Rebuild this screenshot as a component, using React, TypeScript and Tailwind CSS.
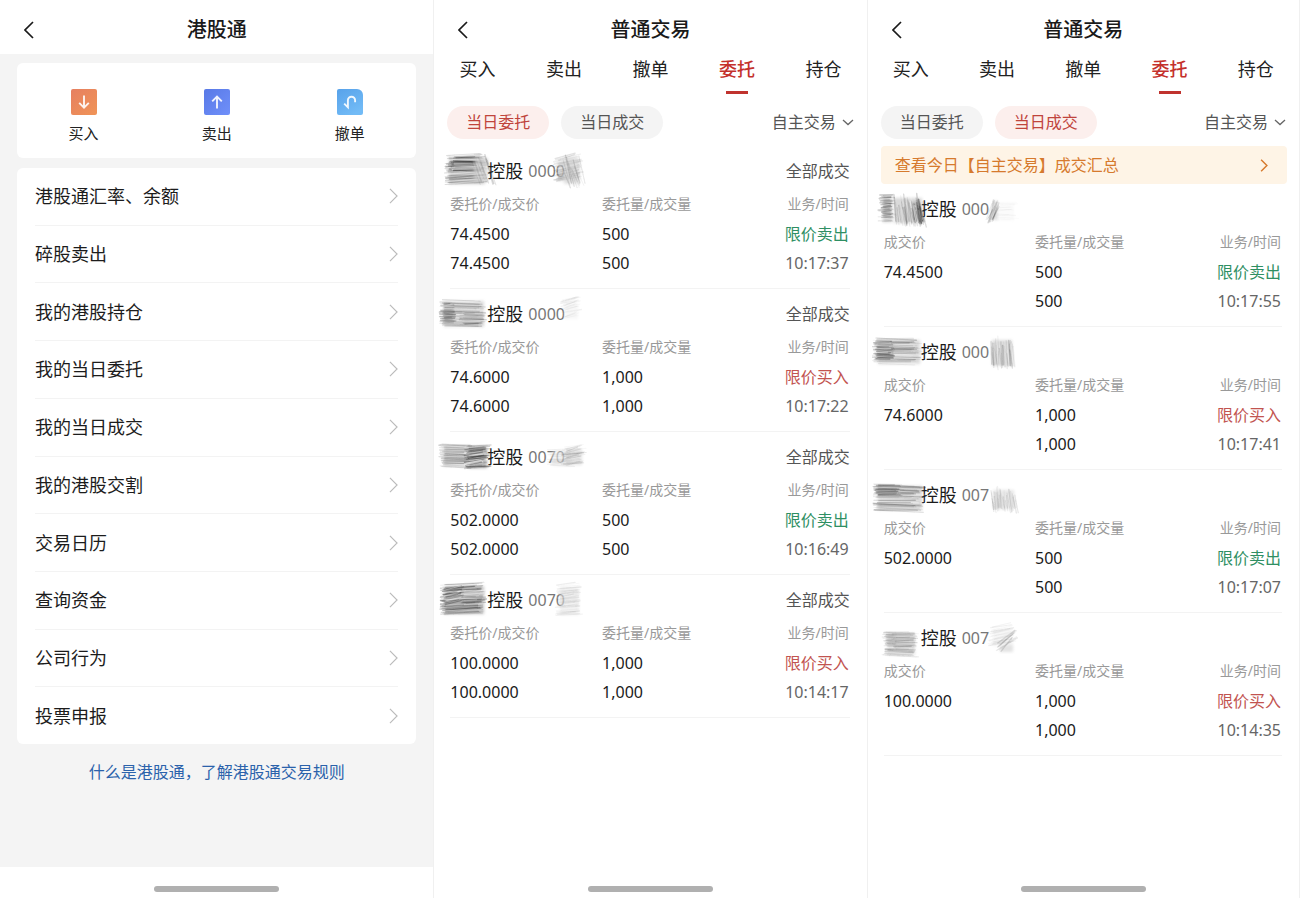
import React, { useState } from 'react';

type Hatch = {
  x: number;
  y: number;
  w: number;
  h: number;
  tone: number;
  count: number;
  vertical?: boolean;
  slant?: number;
};

type Order = {
  code: string;
  prices: string[];
  volume: string;
  side: 'buy' | 'sell';
  time: string;
  mask: Hatch[];
};

const heldOrders: Order[] = [
  {
    code: '0000',
    prices: ['74.4500', '74.4500'],
    volume: '500',
    side: 'sell',
    time: '10:17:37',
    mask: [
      { x: 9, y: 9, w: 40, h: 30, tone: 0.36, count: 60, slant: -2 },
      { x: 15, y: 9, w: 30, h: 16, tone: 0.5, count: 34 },
      { x: 34, y: 10, w: 18, h: 26, tone: 0.22, count: 14, vertical: true, slant: -7 },
      { x: 118, y: 12, w: 26, h: 24, tone: 0.2, count: 44, slant: -5 },
      { x: 124, y: 9, w: 18, h: 30, tone: 0.2, count: 16, vertical: true, slant: -7 },
    ],
  },
  {
    code: '0000',
    prices: ['74.6000', '74.6000'],
    volume: '1,000',
    side: 'buy',
    time: '10:17:22',
    mask: [
      { x: 4, y: 10, w: 44, h: 29, tone: 0.24, count: 56, slant: 1 },
      { x: 4, y: 14, w: 13, h: 20, tone: 0.4, count: 22 },
      { x: 24, y: 23, w: 23, h: 14, tone: 0.3, count: 22 },
      { x: 125, y: 11, w: 17, h: 20, tone: 0.06, count: 28, slant: -4 },
    ],
  },
  {
    code: '0070',
    prices: ['502.0000', '502.0000'],
    volume: '500',
    side: 'sell',
    time: '10:16:49',
    mask: [
      { x: 4, y: 12, w: 30, h: 23, tone: 0.28, count: 40, slant: 1 },
      { x: 29, y: 13, w: 22, h: 24, tone: 0.55, count: 50, slant: -2 },
      { x: 112, y: 17, w: 22, h: 18, tone: 0.08, count: 28 },
      { x: 126, y: 15, w: 20, h: 19, tone: 0.18, count: 32, slant: -3 },
    ],
  },
  {
    code: '0070',
    prices: ['100.0000', '100.0000'],
    volume: '1,000',
    side: 'buy',
    time: '10:14:17',
    mask: [
      { x: 5, y: 9, w: 43, h: 31, tone: 0.4, count: 74, slant: -2 },
      { x: 6, y: 14, w: 20, h: 18, tone: 0.45, count: 30, slant: -3 },
      { x: 22, y: 15, w: 26, h: 5, tone: 0.4, count: 10, slant: -2 },
      { x: 120, y: 10, w: 23, h: 31, tone: 0.1, count: 46, slant: -2 },
    ],
  },
];

const filledOrders: Order[] = [
  {
    code: '000',
    prices: ['74.4500'],
    volume: '500',
    side: 'sell',
    time: '10:17:55',
    mask: [
      { x: 9, y: 11, w: 13, h: 28, tone: 0.4, count: 40 },
      { x: 20, y: 12, w: 32, h: 28, tone: 0.26, count: 44, vertical: true, slant: -3 },
      { x: 38, y: 16, w: 12, h: 22, tone: 0.5, count: 30, vertical: true, slant: -3 },
      { x: 119, y: 15, w: 9, h: 22, tone: 0.22, count: 22, vertical: true, slant: 5 },
      { x: 124, y: 18, w: 20, h: 20, tone: 0.03, count: 20 },
    ],
  },
  {
    code: '000',
    prices: ['74.6000'],
    volume: '1,000',
    side: 'buy',
    time: '10:17:41',
    mask: [
      { x: 4, y: 11, w: 46, h: 27, tone: 0.25, count: 60, slant: 1 },
      { x: 3, y: 14, w: 20, h: 18, tone: 0.45, count: 38, slant: 1 },
      { x: 118, y: 11, w: 24, h: 29, tone: 0.24, count: 46, vertical: true, slant: -2 },
    ],
  },
  {
    code: '007',
    prices: ['502.0000'],
    volume: '500',
    side: 'sell',
    time: '10:17:07',
    mask: [
      { x: 4, y: 14, w: 48, h: 27, tone: 0.28, count: 60, slant: 1 },
      { x: 4, y: 14, w: 26, h: 14, tone: 0.35, count: 28 },
      { x: 119, y: 18, w: 25, h: 22, tone: 0.17, count: 42, vertical: true, slant: -2 },
    ],
  },
  {
    code: '007',
    prices: ['100.0000'],
    volume: '1,000',
    side: 'buy',
    time: '10:14:35',
    mask: [
      { x: 13, y: 18, w: 32, h: 25, tone: 0.22, count: 46, slant: 1 },
      { x: 22, y: 20, w: 22, h: 18, tone: 0.22, count: 24 },
      { x: 119, y: 14, w: 24, h: 20, tone: 0.07, count: 30, slant: -4 },
      { x: 126, y: 30, w: 17, h: 10, tone: 0.2, count: 12, slant: -14 },
    ],
  },
];

const noise = (n: number) => {
  const v = Math.sin(n * 127.1 + 11.7) * 43758.5453;
  return v - Math.floor(v);
};

/* Soft pencil strokes scribbled over part of a security's name and code. */
function Scribble({ patches, seed }: { patches: Hatch[]; seed: number }) {
  return (
    <svg
      className="pointer-events-none absolute top-0 -left-3"
      width="160"
      height="48"
      viewBox="0 0 160 48"
      aria-hidden="true"
    >
      <defs>
        <filter id={`wash-${seed}`} x="-20%" y="-20%" width="140%" height="140%">
          <feGaussianBlur stdDeviation="1.6" />
        </filter>
        <filter id={`lead-${seed}`} x="-20%" y="-20%" width="140%" height="140%">
          <feGaussianBlur stdDeviation="0.45" />
        </filter>
      </defs>
      {patches.map((p, i) => (
        <g key={i}>
          <g filter={`url(#wash-${seed})`}>
            <rect x={p.x + 2} y={p.y + 2} width={p.w - 4} height={p.h - 3} fill="#fff" opacity={0.6} />
            <rect x={p.x + 2} y={p.y + 2} width={p.w - 4} height={p.h - 3} fill="#444" opacity={p.tone * 0.75} />
          </g>
          <g filter={`url(#lead-${seed})`}>
            {Array.from({ length: p.count }, (_, k) => {
              const s = seed * 1000 + i * 131 + k * 7;
              const slant = p.slant ?? 0;
              const a = noise(s) * 6 - 3;
              const b = noise(s + 1) * 6 - 3;
              const t = k / p.count;
              const short = noise(s + 2) * 0.5;
              const line = p.vertical
                ? { x1: p.x + t * p.w, y1: p.y + a + short * p.h, x2: p.x + t * p.w - slant + b / 2, y2: p.y + p.h + b }
                : { x1: p.x + a, y1: p.y + t * p.h, x2: p.x + p.w * (1 - short / 2) + b, y2: p.y + t * p.h + slant + b / 2 };
              return (
                <line
                  key={k}
                  {...line}
                  stroke={noise(s + 3) > 0.66 ? '#fff' : '#333'}
                  strokeWidth={0.6 + noise(s + 4) * 0.9}
                  strokeLinecap="round"
                  opacity={p.tone * (0.2 + noise(s + 5) * 0.7)}
                />
              );
            })}
          </g>
        </g>
      ))}
    </svg>
  );
}

function Chevron({ className, weight }: { className: string; weight: number }) {
  return (
    <svg className={className} viewBox="0 0 10 18" fill="none" stroke="currentColor" strokeWidth={weight} aria-hidden="true">
      <path d="M1 1l8 8-8 8" />
    </svg>
  );
}

function Header({ title }: { title: string }) {
  return (
    <header className="grid h-[54px] grid-cols-[60px_1fr_60px] items-center bg-white pt-1.5">
      <button type="button" aria-label="返回" className="flex h-10 items-center pl-6">
        <Chevron className="h-[18px] w-2.5 rotate-180 text-[#1a1a1a]" weight={1.7} />
      </button>
      <h1 className="text-center text-xl font-medium text-[#1a1a1a]">{title}</h1>
    </header>
  );
}

function HomeBar() {
  return (
    <footer className="mt-auto flex h-[31px] items-end justify-center bg-white pb-1.5">
      <div className="h-1.5 w-[125px] rounded-full bg-[#b0b0b0]" />
    </footer>
  );
}

const iconStroke = { fill: 'none', stroke: '#fff', strokeWidth: 1.9, strokeOpacity: 0.9 } as const;

const actions = [
  {
    label: '买入',
    icon: (
      <svg className="size-[26px]" viewBox="0 0 26 26" aria-hidden="true">
        <defs>
          <linearGradient id="buy" x1="0" y1="0" x2="1" y2="1">
            <stop stopColor="#e67f60" />
            <stop offset="1" stopColor="#f09457" />
          </linearGradient>
        </defs>
        <rect width="26" height="26" rx="2" fill="url(#buy)" />
        <path d="M13 6.5v12M8.2 13.8l4.8 4.8 4.8-4.8" {...iconStroke} />
      </svg>
    ),
  },
  {
    label: '卖出',
    icon: (
      <svg className="size-[26px]" viewBox="0 0 26 26" aria-hidden="true">
        <defs>
          <linearGradient id="sell" x1="0" y1="0" x2="1" y2="1">
            <stop stopColor="#5879e6" />
            <stop offset="1" stopColor="#7090fa" />
          </linearGradient>
        </defs>
        <rect width="26" height="26" rx="2" fill="url(#sell)" />
        <path d="M13 19.5v-12M8.2 12.4l4.8-4.8 4.8 4.8" {...iconStroke} />
      </svg>
    ),
  },
  {
    label: '撤单',
    icon: (
      <svg className="size-[26px]" viewBox="0 0 26 26" aria-hidden="true">
        <defs>
          <linearGradient id="cancel" x1="0" y1="0" x2="0.6" y2="1">
            <stop stopColor="#57a2ea" />
            <stop offset="1" stopColor="#72bbf6" />
          </linearGradient>
        </defs>
        <path d="M2 0h18a6 6 0 0 1 6 6v18a2 2 0 0 1-2 2H2a2 2 0 0 1-2-2V2a2 2 0 0 1 2-2z" fill="url(#cancel)" />
        <path d="M7.2 14.6l3.7 3.7V11.3a3.6 3.6 0 0 1 7.2 0v2" {...iconStroke} />
      </svg>
    ),
  },
];

const menu = [
  '港股通汇率、余额',
  '碎股卖出',
  '我的港股持仓',
  '我的当日委托',
  '我的当日成交',
  '我的港股交割',
  '交易日历',
  '查询资金',
  '公司行为',
  '投票申报',
];

function ConnectScreen() {
  return (
    <section className="flex min-w-0 flex-col">
      <Header title="港股通" />
      <div className="flex-1 bg-[#f4f4f4] px-[17px] pt-[9px]">
        <div className="grid grid-cols-3 rounded-md bg-white pt-[26px] pb-3.5">
          {actions.map((a) => (
            <button key={a.label} type="button" className="flex flex-col items-center gap-2 text-[15px] leading-[21px] text-[#222]">
              {a.icon}
              {a.label}
            </button>
          ))}
        </div>
        <ul className="mt-2.5 flex min-h-[576px] flex-col rounded-md bg-white px-[18px]">
          {menu.map((m) => (
            <li key={m} className="flex flex-1 border-b border-[#f3f3f3] last:border-b-0">
              <a href="#" className="flex flex-1 items-center justify-between text-lg text-[#1c1c1c]">
                {m}
                <Chevron className="h-4 w-[9px] text-[#bbb]" weight={1.3} />
              </a>
            </li>
          ))}
        </ul>
        <p className="pt-4 text-center text-base leading-6">
          <a href="#" className="text-[#2b62ab]">
            什么是港股通，了解港股通交易规则
          </a>
        </p>
      </div>
      <HomeBar />
    </section>
  );
}

function OrderItem({ order, seed, filled }: { order: Order; seed: number; filled: boolean }) {
  const sideClass = order.side === 'sell' ? 'text-[#2f8f63]' : 'text-[#c25450]';
  return (
    <article className="relative mr-[17px] ml-4 border-b border-[#f3f3f3] pt-[7px] pb-[11px]">
      <div className="flex h-9 items-center">
        <h2 className="pl-[37px] text-lg text-[#1a1a1a]">控股</h2>
        <span className="pl-[5px] text-base text-[#777]">{order.code}</span>
        {!filled && <span className="ml-auto text-base text-[#555]">全部成交</span>}
      </div>
      <Scribble patches={order.mask} seed={seed} />
      <table className="w-full table-fixed border-collapse text-left text-base text-[#1a1a1a]">
        <thead>
          <tr className="h-[30px] text-sm text-[#999]">
            <th className="w-[38%] p-0 font-normal">{filled ? '成交价' : '委托价/成交价'}</th>
            <th className="p-0 font-normal">委托量/成交量</th>
            <th className="w-[30%] p-0 pr-px text-right font-normal">业务/时间</th>
          </tr>
        </thead>
        <tbody>
          <tr className="h-[29px]">
            <td className="p-0">{order.prices[0]}</td>
            <td className="p-0">{order.volume}</td>
            <td className={`p-0 pr-px text-right ${sideClass}`}>限价{order.side === 'sell' ? '卖出' : '买入'}</td>
          </tr>
          <tr className="h-[29px]">
            <td className="p-0">{order.prices[1]}</td>
            <td className="p-0">{order.volume}</td>
            <td className="p-0 pr-px text-right text-[#666]">{order.time}</td>
          </tr>
        </tbody>
      </table>
    </article>
  );
}

const tabs = ['买入', '卖出', '撤单', '委托', '持仓'];
const views = ['当日委托', '当日成交'];

function TradeScreen({ initialView, className }: { initialView: number; className: string }) {
  const [tab, setTab] = useState(3);
  const [view, setView] = useState(initialView);
  const filled = view === 1;
  const orders = filled ? filledOrders : heldOrders;
  return (
    <section className={`flex min-w-0 flex-col border-l border-[#f0f0f0] ${className}`}>
      <Header title="普通交易" />
      <nav className="grid h-10 grid-cols-5">
        {tabs.map((t, i) => (
          <button
            key={t}
            type="button"
            onClick={() => setTab(i)}
            className={`flex flex-col items-center justify-between text-lg leading-[30px] ${
              i === tab ? 'font-medium text-[#c4302b]' : 'text-[#222]'
            }`}
          >
            {t}
            {i === tab && <span className="h-[3px] w-[22px] bg-[#c0332e]" />}
          </button>
        ))}
      </nav>
      <div className="flex h-[52px] items-center gap-3 pt-[5px] pr-[13px] pl-[13px]">
        {views.map((v, i) => (
          <button
            key={v}
            type="button"
            onClick={() => setView(i)}
            className={`h-[33px] w-[102px] rounded-full pb-0.5 text-base ${
              i === view ? 'bg-[#fcefed] text-[#c0443c]' : 'bg-[#f4f4f4] text-[#555]'
            }`}
          >
            {v}
          </button>
        ))}
        <div className="ml-auto flex items-center">
          <select
            aria-label="交易方式"
            className="-mr-3 appearance-none bg-transparent pr-[17px] pb-0.5 text-base text-[#555]"
          >
            <option>自主交易</option>
          </select>
          <svg className="pointer-events-none h-[7px] w-3" viewBox="0 0 12 7" fill="none" stroke="#666" strokeWidth="1.3" aria-hidden="true">
            <path d="M1 1l5 4.6L11 1" />
          </svg>
        </div>
      </div>
      {filled && (
        <a href="#" className="mr-3 ml-[13px] flex h-[38px] items-center justify-between rounded bg-[#fef4e6] pr-[19px] pl-3.5 text-base text-[#d67a2d]">
          查看今日【自主交易】成交汇总
          <Chevron className="h-[13px] w-2" weight={2} />
        </a>
      )}
      {orders.map((o, i) => (
        <OrderItem key={o.time} order={o} seed={view * 4 + i + 1} filled={filled} />
      ))}
      <HomeBar />
    </section>
  );
}

export default function App() {
  return (
    <main
      lang="zh-CN"
      className="grid min-h-screen grid-cols-3 bg-white font-['Noto_Sans','Noto_Sans_CJK_SC',sans-serif]"
    >
      <ConnectScreen />
      <TradeScreen initialView={0} className="" />
      <TradeScreen initialView={1} className="border-r" />
    </main>
  );
}
